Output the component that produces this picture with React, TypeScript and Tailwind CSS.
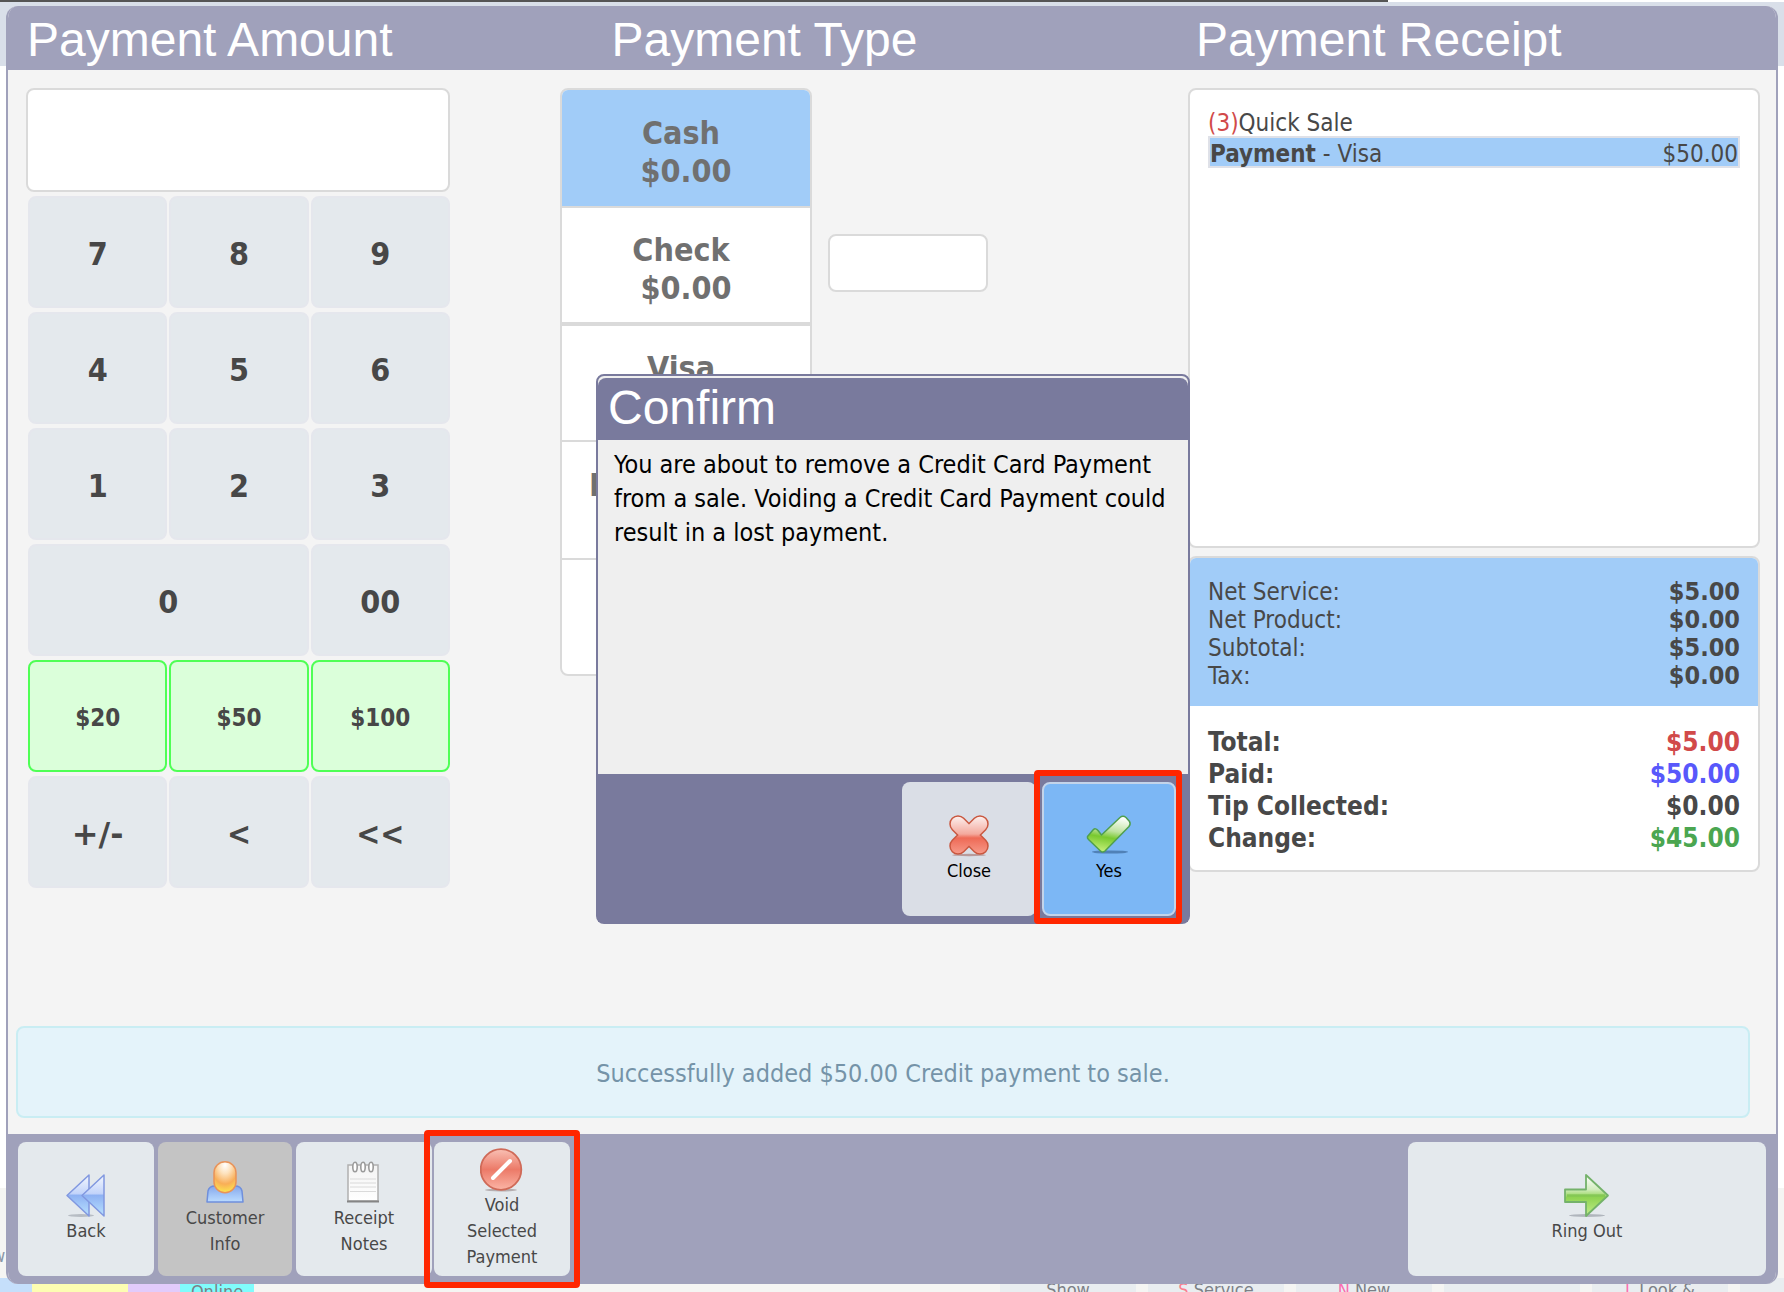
import React from "react";

const BODY_FONT = "font-['DejaVu_Sans_Condensed','DejaVu_Sans',sans-serif]";
const TITLE_FONT = "font-['Liberation_Sans',Arial,sans-serif]";

function BackIcon() {
  return (
    <svg width="44" height="44" viewBox="0 0 44 44" aria-hidden="true">
      <defs>
        <linearGradient id="back" x1="0" y1="0" x2="0" y2="1">
          <stop offset="0" stopColor="#f4f8ff" />
          <stop offset="0.45" stopColor="#c3d4fa" />
          <stop offset="0.5" stopColor="#8fb2f3" />
          <stop offset="1" stopColor="#b9e2ff" />
        </linearGradient>
      </defs>
      <ellipse cx="17" cy="41.500" rx="13" ry="1.500" fill="#9aa0a8" opacity="0.6" />
      <path d="M25 1 L3 21.500 L25 42 Z" fill="url(#back)" stroke="#8198e0" strokeWidth="1.500" strokeLinejoin="round" />
      <path d="M40 1 L18 21.500 L40 42 Z" fill="url(#back)" stroke="#8198e0" strokeWidth="1.500" strokeLinejoin="round" />
    </svg>
  );
}

function CustomerIcon() {
  return (
    <svg width="44" height="44" viewBox="0 0 44 44" aria-hidden="true">
      <defs>
        <radialGradient id="head" cx="0.5" cy="0.1" r="0.95">
          <stop offset="0" stopColor="#ffffff" />
          <stop offset="0.3" stopColor="#fde2bd" />
          <stop offset="0.65" stopColor="#f9ae57" />
          <stop offset="1" stopColor="#fdf04e" />
        </radialGradient>
        <linearGradient id="torso" x1="0" y1="0" x2="0" y2="1">
          <stop offset="0" stopColor="#86a6ea" />
          <stop offset="0.6" stopColor="#a6c8f8" />
          <stop offset="1" stopColor="#bcdcff" />
        </linearGradient>
      </defs>
      <path d="M4 41 L5 30 Q6 25 12 25 L32 25 Q38 25 39 30 L40 41 Z" fill="url(#torso)" stroke="#6f8fdc" strokeWidth="1.500" strokeLinejoin="round" />
      <rect x="11" y="0.800" width="22" height="31" rx="11" fill="url(#head)" stroke="#e8935a" strokeWidth="1.500" />
    </svg>
  );
}

function NotesIcon() {
  return (
    <svg width="44" height="44" viewBox="0 0 44 44" aria-hidden="true">
      <defs>
        <linearGradient id="sheet" x1="0" y1="0" x2="0" y2="1">
          <stop offset="0" stopColor="#f3f3f3" />
          <stop offset="1" stopColor="#ffffff" />
        </linearGradient>
      </defs>
      <rect x="6" y="4" width="30" height="36" fill="url(#sheet)" stroke="#b0b0b0" strokeWidth="1.500" />
      <path d="M5 40.500 H37" stroke="#858585" strokeWidth="2" />
      <path d="M8 18 H34 M8 22 H34 M8 26 H34 M8 30.500 H34" stroke="#dadada" strokeWidth="1.200" />
      <g fill="#ffffff" stroke="#9a9a9a" strokeWidth="1.600">
        <ellipse cx="13" cy="6" rx="2.200" ry="4.800" />
        <ellipse cx="21" cy="6" rx="2.200" ry="4.800" />
        <ellipse cx="29" cy="6" rx="2.200" ry="4.800" />
      </g>
    </svg>
  );
}

function VoidIcon() {
  return (
    <svg width="44" height="44" viewBox="0 0 44 44" aria-hidden="true">
      <defs>
        <linearGradient id="void" x1="0" y1="0" x2="0" y2="1">
          <stop offset="0" stopColor="#f9c0b4" />
          <stop offset="0.5" stopColor="#ec7a68" />
          <stop offset="1" stopColor="#fbb5a6" />
        </linearGradient>
      </defs>
      <ellipse cx="21" cy="42" rx="16" ry="1.500" fill="#b5aeb0" />
      <circle cx="21" cy="21.500" r="20.300" fill="url(#void)" stroke="#cf6a58" strokeWidth="1.800" />
      <path d="M13 30 L30 13" stroke="#ffffff" strokeWidth="4" strokeLinecap="round" />
    </svg>
  );
}

function RingOutIcon() {
  return (
    <svg width="46" height="44" viewBox="0 0 46 44" aria-hidden="true">
      <defs>
        <linearGradient id="ring" x1="0" y1="0" x2="0" y2="1">
          <stop offset="0" stopColor="#ffffff" />
          <stop offset="0.35" stopColor="#d3edbf" />
          <stop offset="0.55" stopColor="#8fd352" />
          <stop offset="1" stopColor="#c3ee8c" />
        </linearGradient>
      </defs>
      <ellipse cx="23" cy="41.500" rx="18" ry="1.500" fill="#9aa0a8" opacity="0.7" />
      <path d="M1 15.500 H22 V1 L44 21.500 L22 42 V28 H1 Z" fill="url(#ring)" stroke="#74b26a" strokeWidth="1.800" strokeLinejoin="round" />
      <path d="M3 21.500 H41" stroke="#6fbb42" strokeWidth="2.500" opacity="0.55" />
    </svg>
  );
}

function CloseIcon() {
  return (
    <svg width="44" height="44" viewBox="0 0 44 44" aria-hidden="true">
      <defs>
        <linearGradient id="close" gradientUnits="userSpaceOnUse" x1="0" y1="2" x2="0" y2="42">
          <stop offset="0" stopColor="#fdf1ef" />
          <stop offset="0.45" stopColor="#f4a99d" />
          <stop offset="0.55" stopColor="#ee6a56" />
          <stop offset="1" stopColor="#f8a090" />
        </linearGradient>
      </defs>
      <ellipse cx="22" cy="41" rx="17" ry="1.200" fill="#b99a9a" />
      <g fill="none" strokeLinecap="round">
        <path d="M11 10 L33 32 M33 10 L11 32" stroke="#c9573f" strokeWidth="17.500" />
        <path d="M11 10 L33 32 M33 10 L11 32" stroke="url(#close)" strokeWidth="14.500" />
      </g>
    </svg>
  );
}

function YesIcon() {
  return (
    <svg width="46" height="44" viewBox="0 0 46 44" aria-hidden="true">
      <defs>
        <linearGradient id="yes" x1="0.6" y1="0" x2="0.4" y2="1">
          <stop offset="0" stopColor="#ffffff" />
          <stop offset="0.4" stopColor="#bfe39f" />
          <stop offset="0.6" stopColor="#79c92f" />
          <stop offset="1" stopColor="#c6f07a" />
        </linearGradient>
      </defs>
      <ellipse cx="24" cy="38" rx="18" ry="1.600" fill="#3d6a9c" opacity="0.7" />
      <path
        d="M1.500 22.500 L7 16 Q9.500 13.500 12 16.500 L15.500 21 L34 3.500 Q37 1 40 3.500 L43.500 7.500 Q45 10 43 12.500 L19 37 Q16.500 39 14.500 37 L2.500 25.500 Q1 24 1.500 22.500 Z"
        fill="url(#yes)"
        stroke="#4f9f4e"
        strokeWidth="1.500"
        strokeLinejoin="round"
      />
    </svg>
  );
}

function Key({ label, look = "border-[#e5e7ed] bg-[#e4e9ed] text-[32px]" }: { label: string; look?: string }) {
  return (
    <button type="button" className={"h-28 rounded-lg border-2 pt-1 font-bold text-[#474747] " + look}>
      {label}
    </button>
  );
}

const CASH_KEY = "border-[#4fff55] bg-[#dbffda] text-2xl";
const WIDE_KEY = "col-span-2 border-[#e5e7ed] bg-[#e4e9ed] text-[32px]";
const SIGN_KEY = "border-[#e5e7ed] bg-[#e4e9ed] font-['DejaVu_Sans',sans-serif] text-[32px]";

function PaymentType({ name, amount, look }: { name: string; amount: string; look: string }) {
  return (
    <button
      type="button"
      className={"flex w-full flex-col items-center justify-center whitespace-pre border-[#dadada] pt-2 text-[32px] leading-[38px] font-bold text-[#707070] " + look}
    >
      <span>{name + " "}</span>
      <span>{amount}</span>
    </button>
  );
}

function ToolButton({ icon, lines, look, callout }: { icon: React.ReactNode; lines: string[]; look: string; callout?: string }) {
  return (
    <div className="relative">
      <button type="button" className={"flex h-[134px] flex-col items-center justify-center rounded-lg text-lg leading-[26px] " + look}>
        {icon}
        {lines.map((l) => (
          <span key={l}>{l}</span>
        ))}
      </button>
      {callout && <span className={"pointer-events-none absolute rounded-sm border-[6px] border-[#ff2600] " + callout} />}
    </div>
  );
}

const TOTALS_TOP = [
  ["Net Service:", "$5.00"],
  ["Net Product:", "$0.00"],
  ["Subtotal:", "$5.00"],
  ["Tax:", "$0.00"],
];

const TOTALS_BOTTOM = [
  ["Total:", "$5.00", "text-[#d14a4a]"],
  ["Paid:", "$50.00", "text-[#5858fb]"],
  ["Tip Collected:", "$0.00", ""],
  ["Change:", "$45.00", "text-[#4ba650]"],
];

const TILE = "w-[136px] shrink-0 bg-[#e9edf0] text-center text-lg leading-6";

export default function App() {
  return (
    <div className={"relative flex h-screen min-h-[1200px] flex-col overflow-hidden bg-white " + BODY_FONT}>
      {/* page behind the payment window */}
      <div className="absolute inset-x-0 top-0.5 h-16 bg-[#d9dfe9]" />
      <div className="absolute inset-x-0 bottom-0 h-[104px] bg-[#f5f5f3]" />
      <div className="absolute bottom-[22px] left-0 w-4 -translate-x-2 text-lg text-[#8a97a8]">w</div>
      <div className="absolute inset-x-0 bottom-0 flex h-[14px] overflow-hidden text-[#7c8086]">
        <div className="w-8 shrink-0 bg-[#c5dffb]" />
        <div className="w-24 shrink-0 bg-[#fdfdb2]" />
        <div className="w-[52px] shrink-0 bg-[#e2cbfb]" />
        <div className="w-[74px] shrink-0 bg-[#80fcfc] pt-0.5 text-center text-lg leading-6">Online</div>
        <div className="flex-1" />
        <div className="flex shrink-0 gap-3">
          <div className={TILE}>Show</div>
          <div className={TILE}>
            <span className="text-[#fb7f8f]">S</span> Service
          </div>
          <div className={TILE}>
            <span className="text-[#fb6fb0]">N</span> New
          </div>
          <div className={TILE} />
          <div className={TILE}>
            <span className="text-[#fb6fb0]">L</span> Look &amp;
          </div>
          <div className="w-11 shrink-0 bg-[#e9edf0]" />
        </div>
      </div>

      <div className="relative flex h-0.5 shrink-0 bg-white">
        <div className="w-[77.8%] bg-[#555555]" />
      </div>

      <main className="relative mx-1.5 mt-1 mb-2 flex flex-1 flex-col overflow-hidden rounded-xl border-x-2 border-[#a0a1bb] bg-[#f4f4f4]">
        <header className={"flex h-16 shrink-0 bg-[#a0a1bb] pt-0.5 pl-0.5 text-5xl leading-[64px] text-white " + TITLE_FONT}>
          <h1 className="w-[33.1%] pl-[17px]">Payment Amount</h1>
          <h1 className="w-[33.1%] pl-[17px]">Payment Type</h1>
          <h1 className="w-[33.1%] pl-[17px]">Payment Receipt</h1>
        </header>

        <div className="grid grid-cols-[534fr_628fr_572fr] items-start pt-[18px] pr-4 pl-[18px]">
          <section className="pr-[110px]">
            <input aria-label="Payment amount" className="block h-[104px] w-full rounded-lg border-2 border-[#dadada] bg-white px-4 text-right text-[32px]" />
            <div className="mt-1 ml-0.5 grid grid-cols-3 gap-x-0.5 gap-y-1">
              <Key label="7" />
              <Key label="8" />
              <Key label="9" />
              <Key label="4" />
              <Key label="5" />
              <Key label="6" />
              <Key label="1" />
              <Key label="2" />
              <Key label="3" />
              <Key label="0" look={WIDE_KEY} />
              <Key label="00" />
              <Key label="$20" look={CASH_KEY} />
              <Key label="$50" look={CASH_KEY} />
              <Key label="$100" look={CASH_KEY} />
              <Key label="+/-" look={SIGN_KEY} />
              <Key label="<" />
              <Key label="<<" />
            </div>
          </section>

          <section className="flex items-start gap-4">
            <div className="w-[252px] overflow-hidden rounded-lg border-2 border-[#dadada] bg-white">
              <PaymentType name="Cash" amount="$0.00" look="h-[118px] border-b-2 bg-[#a1ccf8]" />
              <PaymentType name="Check" amount="$0.00" look="h-[118px] border-b-4" />
              <PaymentType name="Visa" amount="$50.00" look="h-[116px] border-b-2" />
              <PaymentType name="Mastercard" amount="$0.00" look="h-[118px] border-b-2" />
              <PaymentType name="Discover" amount="$0.00" look="h-[114px]" />
            </div>
            <input aria-label="Check number" className="mt-[146px] h-[58px] w-40 rounded-lg border-2 border-[#dadada] bg-white px-3 text-2xl" />
          </section>

          <section className="flex flex-col gap-2 text-[#484848]">
            <div className="h-[460px] rounded-lg border-2 border-[#dadada] bg-white px-[18px] pt-5 text-2xl">
              <p className="leading-[26px]">
                <span className="text-[#d14a4a]">(3)</span>Quick Sale
              </p>
              <button type="button" className="flex w-full justify-between border-2 border-[#dfe1e8] bg-[#a1ccf8] pt-1 leading-6">
                <span>
                  <b>Payment</b> - Visa
                </span>
                <span>$50.00</span>
              </button>
            </div>
            <div className="overflow-hidden rounded-lg border-2 border-[#dadada] bg-white">
              <dl className="bg-[#a1ccf8] px-[18px] pt-5 pb-4 text-2xl leading-7">
                {TOTALS_TOP.map(([label, value]) => (
                  <div key={label} className="flex justify-between">
                    <dt>{label}</dt>
                    <dd className="text-[25px] leading-7 font-bold">{value}</dd>
                  </div>
                ))}
              </dl>
              <dl className="px-[18px] pt-5 pb-4 text-[26px] leading-8 font-bold">
                {TOTALS_BOTTOM.map(([label, value, color]) => (
                  <div key={label} className="flex justify-between">
                    <dt>{label}</dt>
                    <dd className={color}>{value}</dd>
                  </div>
                ))}
              </dl>
            </div>
          </section>
        </div>

        <p role="status" className="mt-auto mr-[26px] mb-4 ml-2 rounded-lg border-2 border-[#c9edf3] bg-[#e4f3fa] pt-[30px] pb-[26px] text-center text-[25px] leading-8 text-[#7593a8]">
          Successfully added $50.00 Credit payment to sale.
        </p>

        <footer className="flex h-[150px] shrink-0 items-center gap-1 bg-[#a0a1bb] px-[10px] text-[#484848]">
          <ToolButton icon={<BackIcon />} lines={["Back"]} look="w-[136px] bg-[#e4e9ed]" />
          <ToolButton icon={<CustomerIcon />} lines={["Customer", "Info"]} look="w-[134px] bg-[#c4c4c4]" />
          <ToolButton icon={<NotesIcon />} lines={["Receipt", "Notes"]} look="w-[136px] bg-[#e4e9ed]" />
          <div className="ml-auto">
            <ToolButton icon={<RingOutIcon />} lines={["Ring Out"]} look="w-[358px] bg-[#e4e9ed]" />
          </div>
        </footer>
      </main>

      {/* void button with its callout, which reaches past the toolbar */}
      <div className="absolute bottom-4 left-[434px] text-[#484848]">
        <ToolButton
          icon={<VoidIcon />}
          lines={["Void", "Selected", "Payment"]}
          look="w-[136px] bg-[#e4e9ed]"
          callout="-inset-x-[10px] -inset-y-[12px]"
        />
      </div>

      <div
        role="dialog"
        aria-labelledby="confirm-title"
        className="absolute inset-x-0 top-[374px] left-0.5 mx-auto w-[594px] rounded-lg border-2 border-[#797a9d] bg-[#efefef] pt-0.5"
      >
        <h2 id="confirm-title" className={"h-[62px] rounded-t-lg bg-[#797a9d] pl-[10px] text-5xl leading-[60px] text-white " + TITLE_FONT}>
          Confirm
        </h2>
        <p className="h-[334px] pt-2 pr-1 pl-4 text-[25px] leading-[34px] text-black">
          You are about to remove a Credit Card Payment from a sale. Voiding a Credit Card Payment could result in a lost payment.
        </p>
        <div className="flex h-[148px] items-start justify-end gap-1.5 bg-[#797a9d] pt-2 pr-3 text-black">
          <ToolButton icon={<CloseIcon />} lines={["Close"]} look="w-[134px] bg-[#dadee6]" />
          <ToolButton
            icon={<YesIcon />}
            lines={["Yes"]}
            look="w-[134px] border-2 border-[#c3d4ea] bg-[#7cb7f5]"
            callout="-top-3 -right-1.5 -bottom-2 -left-2"
          />
        </div>
      </div>
    </div>
  );
}
